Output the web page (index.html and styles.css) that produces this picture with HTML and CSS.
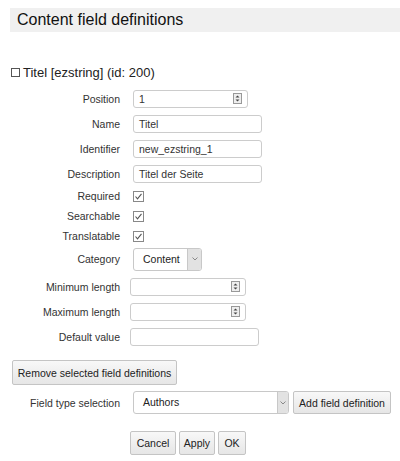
FILE: index.html
```html
<!DOCTYPE html>
<html lang="en">
  <head>
    <meta charset="UTF-8" />
    <title>Content field definitions</title>
    <link rel="stylesheet" href="styles.css">
  </head>
  <body>
    <div class="page">
      <h1 class="page-title">Content field definitions</h1>

      <div class="field-def-head">
        <svg class="head-box" width="9" height="9" viewBox="0 0 9 9"><rect x="0.5" y="0.5" width="8" height="8" fill="#fff" stroke="#555"/></svg>
        <span>Titel [ezstring] (id: 200)</span>
      </div>

      <div class="field-rows">
        <div class="field">
          <span class="field-label">Position</span>
          <div class="input input-short">
            <span>1</span>
            <svg class="spinner" width="9" height="11" viewBox="0 0 9 11"><rect x="0.5" y="0.5" width="8" height="10" fill="#eee" stroke="#999"/><path d="M2.5 4.5 L4.5 2.5 L6.5 4.5 Z M2.5 6.5 L4.5 8.5 L6.5 6.5 Z" fill="#444"/></svg>
          </div>
        </div>
        <div class="field">
          <span class="field-label">Name</span>
          <div class="input input-long"><span>Titel</span></div>
        </div>
        <div class="field">
          <span class="field-label">Identifier</span>
          <div class="input input-long"><span>new_ezstring_1</span></div>
        </div>
        <div class="field">
          <span class="field-label">Description</span>
          <div class="input input-long"><span>Titel der Seite</span></div>
        </div>

        <div class="field field--check">
          <span class="field-label">Required</span>
          <svg class="check" width="11" height="11" viewBox="0 0 11 11"><rect x="0.5" y="0.5" width="10" height="10" fill="#fff" stroke="#888"/><path d="M2.5 5.5 L4.5 7.8 L8.5 2.8" fill="none" stroke="#555" stroke-width="1.1"/></svg>
        </div>
        <div class="field field--check">
          <span class="field-label">Searchable</span>
          <svg class="check" width="11" height="11" viewBox="0 0 11 11"><rect x="0.5" y="0.5" width="10" height="10" fill="#fff" stroke="#888"/><path d="M2.5 5.5 L4.5 7.8 L8.5 2.8" fill="none" stroke="#555" stroke-width="1.1"/></svg>
        </div>
        <div class="field field--check">
          <span class="field-label">Translatable</span>
          <svg class="check" width="11" height="11" viewBox="0 0 11 11"><rect x="0.5" y="0.5" width="10" height="10" fill="#fff" stroke="#888"/><path d="M2.5 5.5 L4.5 7.8 L8.5 2.8" fill="none" stroke="#555" stroke-width="1.1"/></svg>
        </div>

        <div class="field field--select">
          <span class="field-label">Category</span>
          <div class="select select-category">
            <span class="select-value">Content</span>
            <span class="select-arrow"><svg width="6" height="4" viewBox="0 0 6 4"><path d="M0.5 0.5 L3 3 L5.5 0.5" fill="none" stroke="#888"/></svg></span>
          </div>
        </div>

        <div class="field field--length field--gap">
          <span class="field-label">Minimum length</span>
          <div class="input input-number">
            <span></span>
            <svg class="spinner" width="9" height="11" viewBox="0 0 9 11"><rect x="0.5" y="0.5" width="8" height="10" fill="#eee" stroke="#999"/><path d="M2.5 4.5 L4.5 2.5 L6.5 4.5 Z M2.5 6.5 L4.5 8.5 L6.5 6.5 Z" fill="#444"/></svg>
          </div>
        </div>
        <div class="field field--length">
          <span class="field-label">Maximum length</span>
          <div class="input input-number">
            <span></span>
            <svg class="spinner" width="9" height="11" viewBox="0 0 9 11"><rect x="0.5" y="0.5" width="8" height="10" fill="#eee" stroke="#999"/><path d="M2.5 4.5 L4.5 2.5 L6.5 4.5 Z M2.5 6.5 L4.5 8.5 L6.5 6.5 Z" fill="#444"/></svg>
          </div>
        </div>
        <div class="field field--length">
          <span class="field-label">Default value</span>
          <div class="input input-long"><span></span></div>
        </div>
      </div>

      <button class="btn btn-remove">Remove selected field definitions</button>

      <div class="type-row">
        <span class="field-label">Field type selection</span>
        <div class="select select-type">
          <span class="select-value">Authors</span>
          <span class="select-arrow"><svg width="6" height="4" viewBox="0 0 6 4"><path d="M0.5 0.5 L3 3 L5.5 0.5" fill="none" stroke="#888"/></svg></span>
        </div>
        <button class="btn btn-add">Add field definition</button>
      </div>

      <div class="actions">
        <button class="btn btn-cancel">Cancel</button>
        <button class="btn btn-apply">Apply</button>
        <button class="btn btn-ok">OK</button>
      </div>
    </div>
  </body>
</html>
```

FILE: styles.css
```css
* {
  margin: 0;
  padding: 0;
  box-sizing: border-box;
}

body {
  font-family: "Liberation Sans", Arial, sans-serif;
  font-size: 10.5px;
  color: #333;
  background: #fff;
}

.page {
  padding: 8px 0 0 10px;
}

.page-title {
  height: 24px;
  line-height: 24px;
  padding-left: 7px;
  background: #f0f0f0;
  font-size: 16px;
  font-weight: normal;
  color: #111;
}

.field-def-head {
  display: flex;
  align-items: center;
  gap: 3px;
  height: 16px;
  margin-top: 32px;
  font-size: 13px;
  color: #222;
}

.head-box {
  margin-left: 1px;
}

.field-rows {
  margin-top: 6px;
}

.field {
  display: grid;
  grid-template-columns: 110px auto;
  column-gap: 13px;
  align-items: center;
  justify-items: start;
  height: 25px;
}

.field-label {
  justify-self: end;
  text-align: right;
  white-space: nowrap;
}

.field--check {
  height: 20px;
}

.field--select {
  height: 26px;
}

.field--length {
  column-gap: 10px;
}

.field--gap {
  margin-top: 2px;
}

.input {
  display: flex;
  align-items: center;
  height: 18px;
  padding: 0 5px;
  background: #fff;
  border: 1px solid #ccc;
  border-radius: 3px;
  color: #333;
}

.input-short {
  width: 115px;
}

.input-long {
  width: 129px;
}

.input-number {
  width: 116px;
}

.spinner {
  margin-left: auto;
}

.select {
  display: flex;
  height: 23px;
  background: #fff;
  border: 1px solid #c8c8c8;
  border-radius: 3px;
  overflow: hidden;
}

.select-value {
  flex: 1;
  padding-left: 9px;
  line-height: 21px;
  color: #222;
}

.select-arrow {
  display: flex;
  align-items: center;
  justify-content: center;
  width: 14px;
  background: #e2e2e2;
  border-left: 1px solid #c8c8c8;
}

.select-category {
  width: 69px;
}

.select-type {
  width: 156px;
}

.select-type .select-arrow {
  width: 11px;
}

.btn {
  height: 24px;
  padding: 0;
  background: linear-gradient(#f8f8f8, #e6e6e6);
  border: 1px solid #c4c4c4;
  border-radius: 2px;
  font-family: inherit;
  font-size: 10.5px;
  color: #222;
  white-space: nowrap;
  text-align: center;
}

.btn-remove {
  display: block;
  width: 165px;
  height: 25px;
  margin: 11px 0 0 2px;
}

.type-row {
  display: flex;
  align-items: center;
  margin-top: 6px;
}

.type-row .field-label {
  width: 110px;
  margin-right: 13px;
}

.btn-add {
  width: 98px;
  height: 23px;
  margin-left: 4px;
}

.actions {
  display: flex;
  gap: 3px;
  margin: 17px 0 0 120px;
}

.btn-cancel {
  width: 46px;
}

.btn-apply {
  width: 36px;
}

.btn-ok {
  width: 28px;
}
```
